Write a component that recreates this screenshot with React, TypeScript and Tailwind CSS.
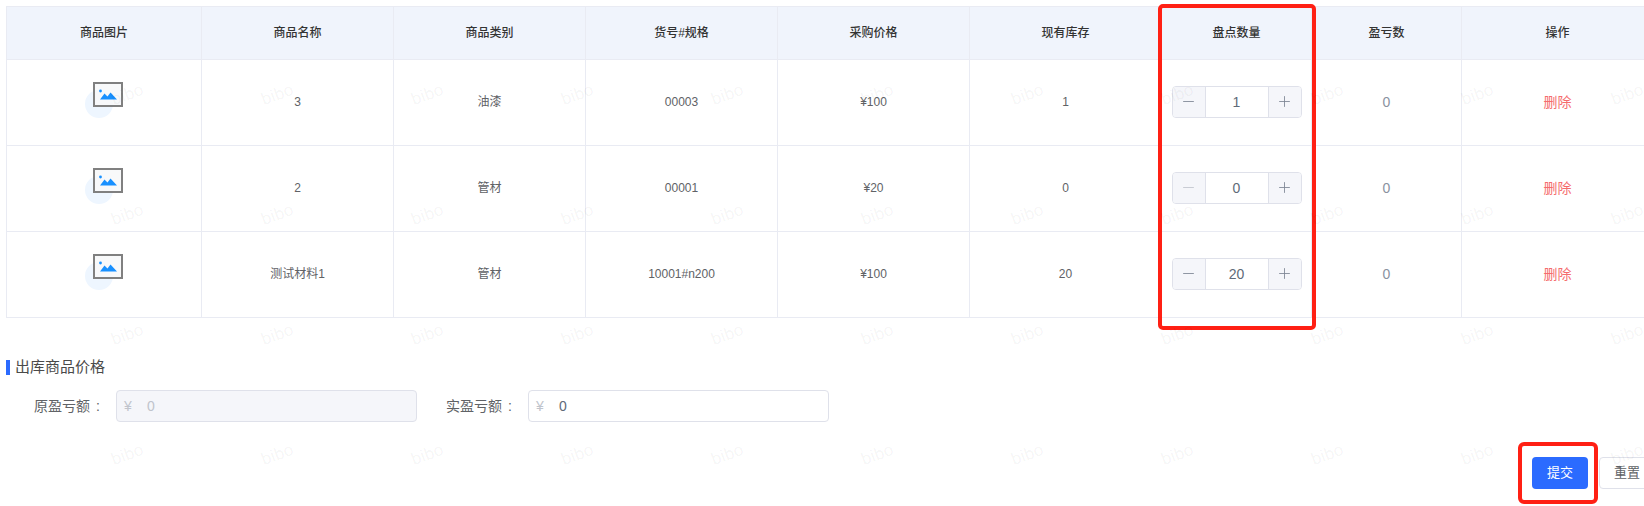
import { Minus, Plus } from "lucide-react";

const rows = [
  { name: "3", category: "油漆", code: "00003", price: "¥100", stock: "1", count: 1 },
  { name: "2", category: "管材", code: "00001", price: "¥20", stock: "0", count: 0 },
  { name: "测试材料1", category: "管材", code: "10001#n200", price: "¥100", stock: "20", count: 20 },
];

const headers = ["商品图片", "商品名称", "商品类别", "货号#规格", "采购价格", "现有库存", "盘点数量", "盈亏数", "操作"];

function PlaceholderIcon() {
  return (
    <svg width="38" height="36" viewBox="0 0 38 36" className="mx-auto mb-[5px] block">
      <circle cx="14" cy="22" r="14" fill="#eef6ff" />
      <rect x="9" y="1" width="28" height="23" fill="#f7f8fa" fillOpacity="0.9" stroke="#808080" strokeWidth="2" />
      <circle cx="15.5" cy="9" r="1.4" fill="#1890ff" />
      <path d="M15 17.5 L19.5 11.5 L22.5 14.5 L25.5 10.5 L32 17.5 Z" fill="#1890ff" />
    </svg>
  );
}

function Stepper({ value }: { value: number }) {
  return (
    <div className="mx-auto flex h-8 w-[130px] overflow-hidden rounded border border-[#dfe1ea] text-sm text-[#606a78]">
      <div className={`flex w-[33px] items-center justify-center border-r border-[#dfe1ea] bg-[#f5f6fa] ${value === 0 ? "text-[#c0c4cc]" : "text-[#7c8492]"}`}>
        <Minus size={17} strokeWidth={1.2} />
      </div>
      <div className="flex flex-1 items-center justify-center bg-white">{value}</div>
      <div className="flex w-[33px] items-center justify-center border-l border-[#dfe1ea] bg-[#f5f6fa] text-[#7c8492]">
        <Plus size={17} strokeWidth={1.2} />
      </div>
    </div>
  );
}

function PriceField({ label, disabled }: { label: string; disabled?: boolean }) {
  return (
    <div className="flex items-center">
      <span className="w-[83px] pr-[16px] text-right text-sm whitespace-nowrap text-[#606266]">
        {label}
        <span className="ml-[6px]">:</span>
      </span>
      <div className={`flex h-8 w-[301px] items-center rounded border border-[#dfe1ea] pl-[7px] text-sm ${disabled ? "bg-[#f5f6fa] text-[#c0c4cc]" : "bg-white text-[#606a78]"}`}>
        <span className="w-[23px] text-[#c0c4cc]">¥</span>
        <span>0</span>
      </div>
    </div>
  );
}

export default function App() {
  return (
    <div className="relative h-[506px] w-[1644px] overflow-hidden bg-white font-['Liberation_Sans','Noto_Sans_CJK_SC',sans-serif]">
      <div className="pt-[6px] pl-[6px]">
        <table className="w-[1647px] table-fixed border-collapse text-center text-xs text-[#606266]">
          <colgroup>
            <col className="w-[195px]" />
            <col className="w-[192px]" />
            <col className="w-[192px]" />
            <col className="w-[192px]" />
            <col className="w-[192px]" />
            <col className="w-[192px]" />
            <col className="w-[150px]" />
            <col className="w-[150px]" />
            <col className="w-[192px]" />
          </colgroup>
          <thead>
            <tr className="h-[53px] bg-[#f0f4fc]">
              {headers.map((h) => (
                <th key={h} className="border border-[#e9ebf3] font-medium text-[#333333]">
                  {h}
                </th>
              ))}
            </tr>
          </thead>
          <tbody>
            {rows.map((row) => (
              <tr key={row.code} className="h-[86px]">
                <td className="border border-[#e9ebf3]">
                  <PlaceholderIcon />
                </td>
                <td className="border border-[#e9ebf3] pb-[2px]">{row.name}</td>
                <td className="border border-[#e9ebf3] pb-[2px]">{row.category}</td>
                <td className="border border-[#e9ebf3] pb-[2px]">{row.code}</td>
                <td className="border border-[#e9ebf3] pb-[2px]">{row.price}</td>
                <td className="border border-[#e9ebf3] pb-[2px]">{row.stock}</td>
                <td className="border border-[#e9ebf3] pb-[2px]">
                  <Stepper value={row.count} />
                </td>
                <td className="border border-[#e9ebf3] pb-[2px] text-sm text-[#8a919f]">0</td>
                <td className="border border-[#e9ebf3] pb-[2px] text-sm text-[#f56c6c]">删除</td>
              </tr>
            ))}
          </tbody>
        </table>

        <div className="mt-[42px] flex h-[15px] items-center border-l-4 border-[#2b6bff] pl-[5px] text-[15px] text-[#4a4a4a]">
          出库商品价格
        </div>

        <div className="mt-[15px] flex gap-[28px] pl-[27px]">
          <PriceField label="原盈亏额" disabled />
          <PriceField label="实盈亏额" />
        </div>

        <div className="mt-[35px] ml-[1526px] flex gap-[11px] text-[13px]">
          <button className="flex h-8 w-14 shrink-0 items-center justify-center rounded bg-[#2b6bff] text-white">提交</button>
          <button className="flex h-8 w-14 shrink-0 items-center justify-center rounded border border-[#dfe1ea] bg-white text-[#606266]">重置</button>
        </div>
      </div>

      {/* red review marks */}
      <div className="absolute top-[4px] left-[1158px] h-[326px] w-[158px] rounded-[5px] border-4 border-[#ff2014]" />
      <div className="absolute top-[442px] left-[1518px] h-[62px] w-[80px] rounded-[6px] border-4 border-[#ff2014]" />

      {/* watermark */}
      <div className="pointer-events-none absolute top-[35px] left-[52px] grid grid-cols-[repeat(11,150px)] grid-rows-[repeat(4,120px)]">
        {Array.from({ length: 44 }).map((_, i) => (
          <div key={i} className="flex items-center justify-center">
            <span className="-rotate-[20deg] font-['Roboto',sans-serif] text-[17px] text-black/[0.05]">bibo</span>
          </div>
        ))}
      </div>
    </div>
  );
}
